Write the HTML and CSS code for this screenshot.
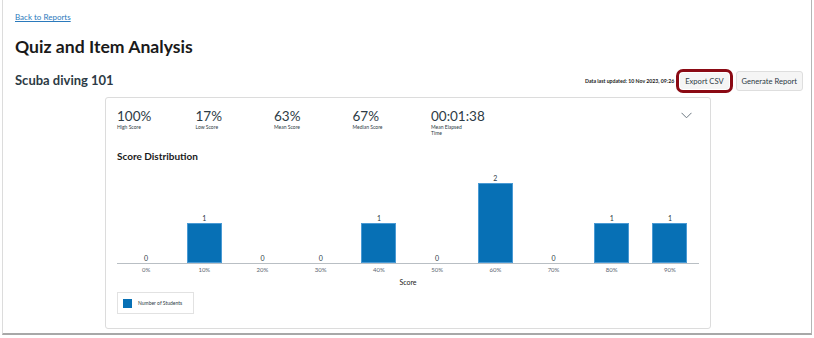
FILE: index.html
```html
<!DOCTYPE html>
<html>
<head>
<meta charset="utf-8">
<link rel="stylesheet" href="styles.css">
</head>
<body>
<div class="frame">
  <a class="back" href="#">Back to Reports</a>
  <h1 class="title">Quiz and Item Analysis</h1>
  <div class="subhead">
    <h2 class="course">Scuba diving 101</h2>
    <div class="actions">
      <span class="updated">Data last updated: 10 Nov 2023, 09:26</span>
      <span class="focus-ring"><button class="btn">Export CSV</button></span>
      <button class="btn">Generate Report</button>
    </div>
  </div>
  <div class="card">
    <div class="stats">
      <div class="stat"><div class="val">100%</div><div class="lbl">High Score</div></div>
      <div class="stat"><div class="val">17%</div><div class="lbl">Low Score</div></div>
      <div class="stat"><div class="val">63%</div><div class="lbl">Mean Score</div></div>
      <div class="stat"><div class="val">67%</div><div class="lbl">Median Score</div></div>
      <div class="stat"><div class="val">00:01:38</div><div class="lbl">Mean Elapsed<br>Time</div></div>
      <svg class="chev" width="11" height="7" viewBox="0 0 11 7"><path d="M0.5 0.8 L5.5 5.8 L10.5 0.8" fill="none" stroke="#6b7780" stroke-width="1"/></svg>
    </div>
    <h3 class="dist">Score Distribution</h3>
    <div class="chart">
      <div class="plot">
        <div class="col"><span class="num">0</span></div>
        <div class="col"><span class="num">1</span><div class="bar" style="height:40px"></div></div>
        <div class="col"><span class="num">0</span></div>
        <div class="col"><span class="num">0</span></div>
        <div class="col"><span class="num">1</span><div class="bar" style="height:40px"></div></div>
        <div class="col"><span class="num">0</span></div>
        <div class="col"><span class="num">2</span><div class="bar" style="height:80px"></div></div>
        <div class="col"><span class="num">0</span></div>
        <div class="col"><span class="num">1</span><div class="bar" style="height:40px"></div></div>
        <div class="col"><span class="num">1</span><div class="bar" style="height:40px"></div></div>
      </div>
      <div class="xlabels">
        <span>0%</span><span>10%</span><span>20%</span><span>30%</span><span>40%</span><span>50%</span><span>60%</span><span>70%</span><span>80%</span><span>90%</span>
      </div>
      <div class="xtitle">Score</div>
    </div>
    <div class="legend"><span class="swatch"></span><span>Number of Students</span></div>
  </div>
</div>
</body>
</html>
```
FILE: styles.css
```css
html, body { margin: 0; padding: 0; background: #fff; }
body { font-family: Lato, "Noto Sans", sans-serif; color: #2d3b45; }
.frame {
  box-sizing: border-box;
  margin-left: 2px;
  width: 810px;
  height: 335px;
  border-left: 1px solid #dcdcdc;
  border-right: 1px solid #b5b5b5;
  border-bottom: 2px solid #a8a8a8;
  padding: 12px 0 0 12px;
}
.back {
  display: block;
  font-size: 8px;
  line-height: 10px;
  color: #2b7abc;
  text-decoration: underline;
}
.title {
  margin: 13px 0 0 0;
  font-size: 17.6px;
  line-height: 24px;
  font-weight: 700;
  color: #1a1a1a;
}
.subhead {
  display: flex;
  align-items: center;
  justify-content: space-between;
  margin-top: 8px;
  padding-right: 8px;
}
.course {
  margin: 0;
  font-size: 13px;
  line-height: 20px;
  font-weight: 700;
  color: #2d3b45;
}
.actions { display: flex; align-items: center; margin-top: 2px; }
.updated { font-size: 5.2px; color: #1a1a1a; font-weight: 700; margin-right: 2px; }
.focus-ring {
  display: inline-flex;
  border: 3px solid #8b0a14;
  border-radius: 7px;
  padding: 1px;
  margin-right: 3px;
}
.btn {
  font-family: Lato, "Noto Sans", sans-serif;
  font-size: 7.6px;
  color: #2d3b45;
  background: #f5f5f5;
  border: 1px solid #dedede;
  border-radius: 3px;
  height: 20px;
  padding: 0 5px;
}
.focus-ring .btn { height: 16px; border-color: #f5f5f5; padding: 0 4px; }
.card {
  margin: 4px 0 0 90px;
  width: 606px;
  height: 232px;
  box-sizing: border-box;
  border: 1px solid #dcdcdc;
  border-radius: 3px;
  padding: 10px 11px 0 11px;
}
.stats { display: flex; position: relative; height: 28px; }
.stat { width: 78.5px; }
.val { font-size: 13.5px; line-height: 16px; color: #2d3b45; }
.lbl { font-size: 5px; line-height: 6px; color: #2d3b45; margin-top: 0; }
.chev { position: absolute; right: 7px; top: 4px; }
.dist { margin: 14px 0 0 0; font-size: 10px; line-height: 12px; font-weight: 700; color: #1a1a1a; }
.chart { margin-top: 9px; }
.plot {
  display: flex;
  height: 92px;
  width: 582px;
  border-bottom: 1px solid #b9bfc4;
}
.col {
  flex: 1;
  display: flex;
  flex-direction: column;
  justify-content: flex-end;
  align-items: center;
}
.num { font-size: 7px; line-height: 9px; color: #2d3b45; }
.bar { width: 35px; background: #0770b5; border: 0.5px solid #4a9ad4; box-sizing: border-box; }
.xlabels { display: flex; width: 582px; margin-top: 2px; }
.xlabels span { flex: 1; text-align: center; font-size: 6px; line-height: 8px; color: #5a6570; }
.xtitle { width: 582px; text-align: center; font-size: 7px; line-height: 10px; margin-top: 3px; color: #1a1a1a; }
.legend {
  display: inline-flex;
  align-items: center;
  margin-top: 5px;
  border: 1px solid #e2e2e2;
  height: 20px;
  padding: 0 11px 0 5px;
  font-size: 5px;
  color: #2d3b45;
}
.swatch { width: 9px; height: 9px; background: #0770b5; margin-right: 6px; }
```
